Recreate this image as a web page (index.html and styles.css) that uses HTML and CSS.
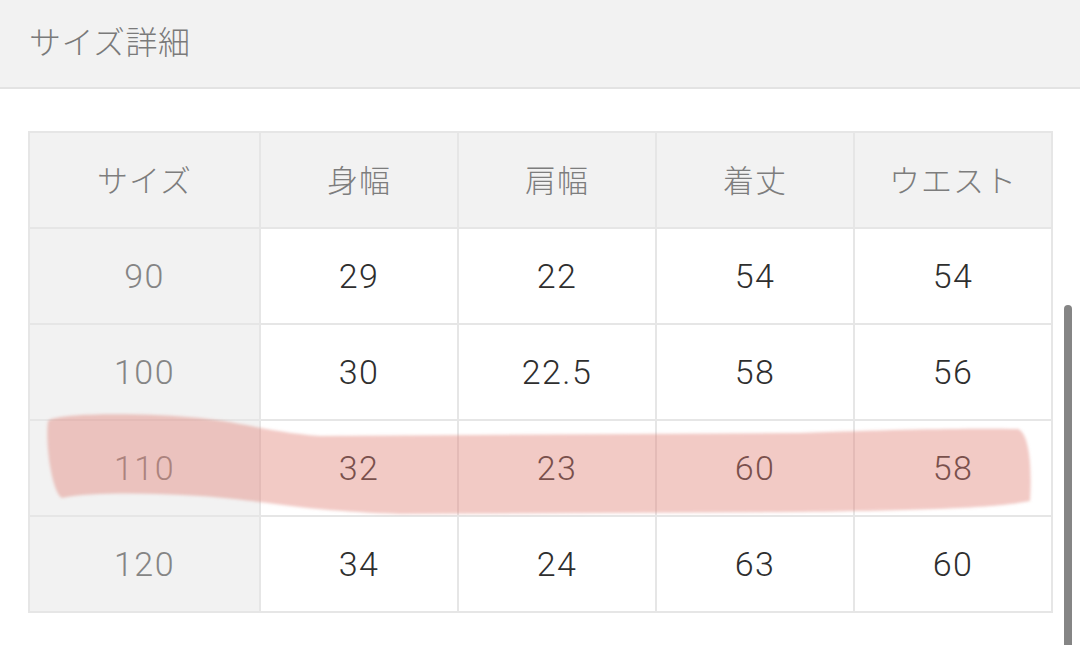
FILE: index.html
```html
<!DOCTYPE html>
<html lang="ja">
<head>
<meta charset="utf-8">
<title>サイズ詳細</title>
<link rel="stylesheet" href="styles.css">
</head>
<body>
<header class="bar">
  <h1 class="title">サイズ詳細</h1>
</header>
<main class="content">
  <table class="sizes">
    <thead>
      <tr>
        <th class="label">サイズ</th>
        <th>身幅</th>
        <th>肩幅</th>
        <th>着丈</th>
        <th>ウエスト</th>
      </tr>
    </thead>
    <tbody>
      <tr><th class="size">90</th><td>29</td><td>22</td><td>54</td><td>54</td></tr>
      <tr><th class="size">100</th><td>30</td><td>22.5</td><td>58</td><td>56</td></tr>
      <tr><th class="size">110</th><td>32</td><td>23</td><td>60</td><td>58</td></tr>
      <tr><th class="size">120</th><td>34</td><td>24</td><td>63</td><td>60</td></tr>
    </tbody>
  </table>
</main>
<svg class="marker" width="1080" height="645" viewBox="0 0 1080 645" aria-hidden="true">
  <defs>
    <filter id="soft" x="-5%" y="-20%" width="110%" height="140%">
      <feGaussianBlur stdDeviation="1.4"/>
    </filter>
  </defs>
  <path filter="url(#soft)" fill="rgba(224,128,116,0.42)"
    d="M48,421 C58,412 150,413 200,418 C240,422 270,432 320,436 L800,433 C900,429 980,428 1018,429 C1030,434 1032,470 1030,501 C1000,507 950,510 800,512 L400,514 C300,511 262,500 200,496 C150,493 92,492 62,498 C52,492 45,445 48,421 Z"/>
</svg>
<div class="scrollbar"></div>
</body>
</html>
```
FILE: styles.css
```css
html, body {
  margin: 0;
  padding: 0;
  background: #ffffff;
  width: 1080px;
  height: 645px;
  overflow: hidden;
  font-family: "Roboto", "Liberation Sans", "Noto Sans CJK JP", sans-serif;
}

body {
  position: relative;
}

.bar {
  height: 87px;
  background: #f2f2f2;
  border-bottom: 2px solid #e3e3e3;
  display: flex;
  align-items: center;
  padding-left: 29px;
}

.title {
  margin: 0;
  font-family: "Noto Sans CJK JP", sans-serif;
  font-weight: 300;
  font-size: 32px;
  color: #7a7a7a;
  letter-spacing: 0.5px;
  padding-bottom: 8px;
}

.content {
  padding: 42px 0 0 28px;
}

.sizes {
  border-collapse: collapse;
  border: 2px solid #e6e6e6;
  table-layout: fixed;
  width: 1025px;
}

.sizes th,
.sizes td {
  border: 2px solid #e6e6e6;
  height: 94px;
  padding: 0;
  text-align: center;
  vertical-align: middle;
  font-weight: 300;
}

.sizes thead th {
  background: #f2f2f2;
  color: #7d7d7d;
  font-family: "Noto Sans CJK JP", sans-serif;
  font-weight: 300;
  font-size: 31px;
  letter-spacing: 1px;
  height: 90px;
  padding-bottom: 4px;
}

.sizes thead th.label {
  width: 229px;
}

.sizes tbody th.size {
  background: #f2f2f2;
  color: #858585;
  font-size: 34px;
  letter-spacing: 1.5px;
}

.sizes td {
  background: #ffffff;
  color: #2e2e2e;
  font-size: 34px;
  letter-spacing: 1.5px;
}

.marker {
  position: absolute;
  left: 0;
  top: 0;
  pointer-events: none;
}

.scrollbar {
  position: absolute;
  left: 1064px;
  top: 305px;
  width: 8px;
  height: 345px;
  background: #858585;
  border-radius: 4px 4px 0 0;
}
```
